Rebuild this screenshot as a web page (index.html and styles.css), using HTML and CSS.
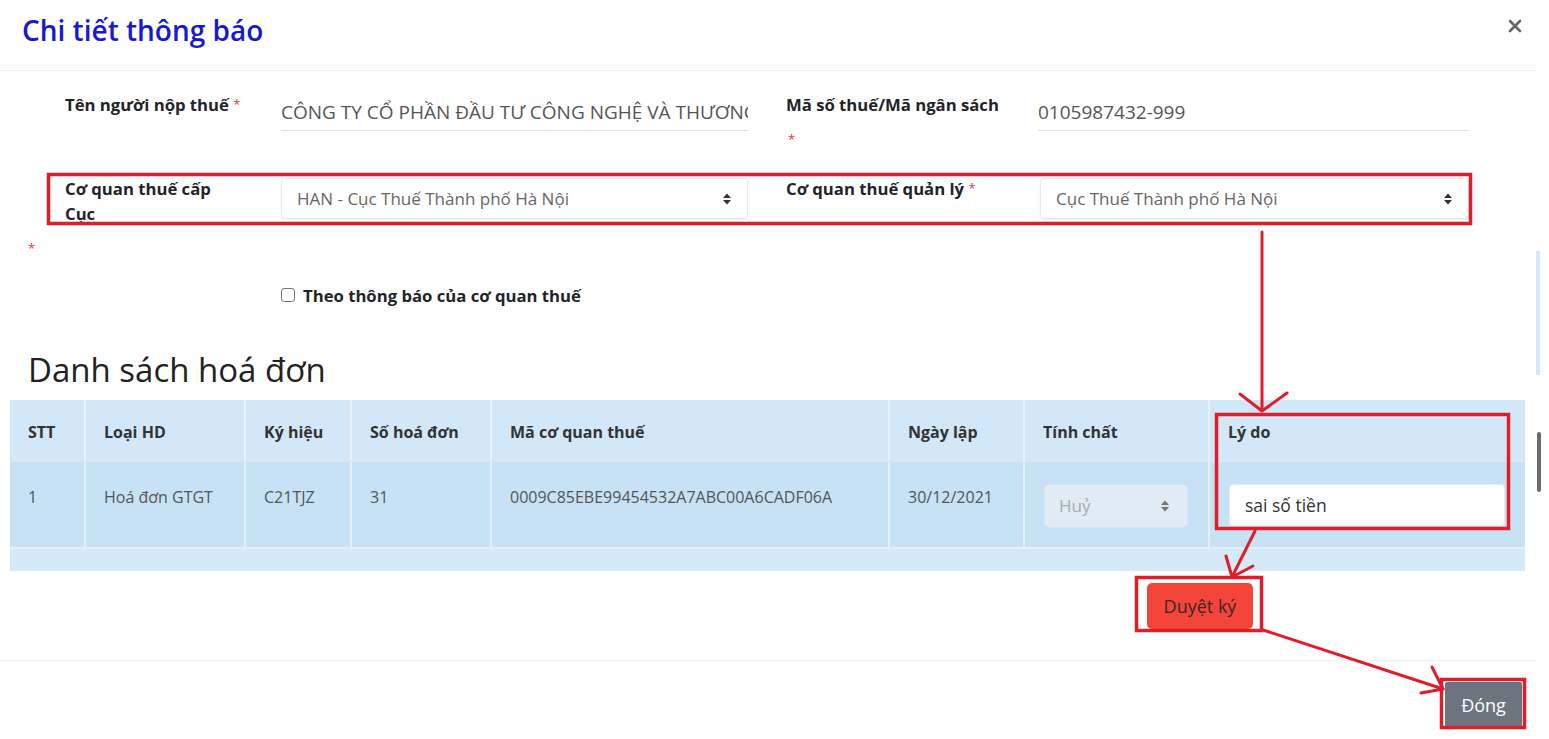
FILE: index.html
```html
<!DOCTYPE html>
<html lang="vi">
<head>
<meta charset="utf-8">
<title>Chi tiết thông báo</title>
<link rel="stylesheet" href="styles.css">
</head>
<body>
<div class="page">
  <div class="modal">
    <header class="modal-header">
      <h1 class="modal-title">Chi tiết thông báo</h1>
      <svg class="close" viewBox="0 0 14 14" width="14" height="14"><path d="M2 2 L12 12 M12 2 L2 12" stroke="#666" stroke-width="2.6" stroke-linecap="round"/></svg>
    </header>

    <main class="modal-body">
      <div class="form-row row-1">
        <label class="lbl lbl-left">Tên người nộp thuế <span class="req">*</span></label>
        <div class="field field-left"><div class="line-input">CÔNG TY CỔ PHẦN ĐẦU TƯ CÔNG NGHỆ VÀ THƯƠNG MẠI</div></div>
        <label class="lbl lbl-right">Mã số thuế/Mã ngân sách<span class="req req-block">*</span></label>
        <div class="field field-right"><div class="line-input">0105987432-999</div></div>
      </div>

      <div class="form-row row-2">
        <label class="lbl lbl-left"><span class="lbl-wrap">Cơ quan thuế cấp Cục</span></label>
        <div class="field field-left">
          <div class="select"><span>HAN - Cục Thuế Thành phố Hà Nội</span><svg class="caret" viewBox="0 0 8 12" width="8" height="12"><path d="M0 5 L4 0.5 L8 5 Z M0 7 L4 11.5 L8 7 Z" fill="#333"/></svg></div>
        </div>
        <label class="lbl lbl-right">Cơ quan thuế quản lý <span class="req">*</span></label>
        <div class="field field-right">
          <div class="select select-right"><span>Cục Thuế Thành phố Hà Nội</span><svg class="caret" viewBox="0 0 8 12" width="8" height="12"><path d="M0 5 L4 0.5 L8 5 Z M0 7 L4 11.5 L8 7 Z" fill="#333"/></svg></div>
        </div>
      </div>

      <div class="orphan-star">*</div>

      <div class="check-row">
        <span class="checkbox"></span>
        <span class="check-label">Theo thông báo của cơ quan thuế</span>
      </div>

      <h2 class="section-title">Danh sách hoá đơn</h2>

      <table class="invoice-table">
        <colgroup>
          <col class="c1"><col class="c2"><col class="c3"><col class="c4"><col class="c5"><col class="c6"><col class="c7"><col class="c8">
        </colgroup>
        <thead>
          <tr>
            <th>STT</th><th>Loại HD</th><th>Ký hiệu</th><th>Số hoá đơn</th><th>Mã cơ quan thuế</th><th>Ngày lập</th><th>Tính chất</th><th>Lý do</th>
          </tr>
        </thead>
        <tbody>
          <tr class="data-row">
            <td>1</td>
            <td>Hoá đơn GTGT</td>
            <td>C21TJZ</td>
            <td>31</td>
            <td>0009C85EBE99454532A7ABC00A6CADF06A</td>
            <td>30/12/2021</td>
            <td class="ctl-cell"><div class="select select-disabled"><span>Huỷ</span><svg class="caret" viewBox="0 0 8 12" width="8" height="12"><path d="M0 5 L4 0.5 L8 5 Z M0 7 L4 11.5 L8 7 Z" fill="#777"/></svg></div></td>
            <td class="ctl-cell"><div class="text-input">sai số tiền</div></td>
          </tr>
          <tr class="blank-row"><td colspan="8"></td></tr>
        </tbody>
      </table>

      <div class="action-row">
        <button class="btn btn-danger">Duyệt ký</button>
      </div>
    </main>

    <footer class="modal-footer">
      <button class="btn btn-secondary">Đóng</button>
    </footer>
  </div>

  <div class="side-strip">
    <div class="track"></div>
    <div class="thumb"></div>
  </div>

  <svg class="annotations" width="1549" height="739" viewBox="0 0 1549 739">
    <g fill="none" stroke="#e11d2a" stroke-width="3.5" stroke-linejoin="miter">
      <rect x="48.5" y="174.5" width="1422" height="49"/>
      <rect x="1216.5" y="414.5" width="292" height="114"/>
      <rect x="1136.5" y="577.5" width="125" height="53"/>
      <rect x="1441.5" y="679.5" width="83" height="48"/>
    </g>
    <g fill="none" stroke="#e11d2a" stroke-width="3" stroke-linecap="round" stroke-linejoin="round">
      <path d="M1262 232 L1262 410"/>
      <path d="M1240 394 L1262 411 L1287 393"/>
      <path d="M1255 531 L1232 577"/>
      <path d="M1226 556 L1232 577 L1253 566"/>
      <path d="M1263 630 L1443 689"/>
      <path d="M1432 667 L1443 689 L1421 693"/>
    </g>
  </svg>
</div>
</body>
</html>
```

FILE: styles.css
```css
* { box-sizing: border-box; }

html, body {
  margin: 0;
  padding: 0;
}

body {
  font-family: "Open Sans", "Noto Sans", sans-serif;
  color: #212529;
  background: #ffffff;
  width: 1549px;
  height: 739px;
  overflow: hidden;
}

.page {
  position: relative;
  display: flex;
  width: 1549px;
  height: 739px;
}

.modal {
  width: 1535px;
  display: flex;
  flex-direction: column;
}

/* Header */
.modal-header {
  height: 71px;
  border-bottom: 1px solid #eceeef;
  display: flex;
  justify-content: space-between;
  align-items: flex-start;
  padding: 12px 13px 0 22px;
}

.modal-title {
  margin: 0;
  font-size: 28px;
  font-weight: 600;
  line-height: 36px;
  color: #1717d6;
}

.close {
  display: block;
  margin-top: 7px;
}

/* Body */
.modal-body {
  height: 589px;
  padding: 21px 10px 0 10px;
}

.form-row {
  display: flex;
  align-items: flex-start;
  padding-left: 55px;
}

.row-1 { height: 84px; }

.lbl {
  font-size: 16.7px;
  font-weight: 700;
  line-height: 25px;
  color: #212529;
}

.lbl-left { width: 216px; }
.lbl-right { width: 252px; margin-left: 38px; }

.lbl-wrap {
  display: block;
  max-width: 160px;
}

.field-left { width: 467px; }
.field-right { width: 431px; }

.req {
  color: #e4393c;
  font-size: 13px;
  font-weight: 400;
  vertical-align: top;
}

.req-block {
  display: block;
  line-height: 20px;
  margin-top: 12px;
  padding-left: 2px;
}

.line-input {
  height: 38px;
  margin-top: 1px;
  border-bottom: 1px solid #dedfe0;
  display: flex;
  align-items: center;
  font-size: 19px;
  color: #555;
  white-space: nowrap;
  overflow: hidden;
}

.select {
  height: 41px;
  margin-top: 2px;
  border: 1px solid #e7e8ea;
  border-radius: 4px;
  background: #fff;
  box-shadow: 0 1px 2px rgba(0, 0, 0, 0.06);
  display: flex;
  align-items: center;
  justify-content: space-between;
  padding: 0 16px 0 15px;
  font-size: 17px;
  color: #666;
  white-space: nowrap;
}

.select-right { margin-left: 2px; }

.caret { display: block; flex: none; }

.orphan-star {
  margin: 10px 0 0 18px;
  height: 24px;
  line-height: 24px;
  font-size: 13px;
  color: #e4393c;
}

.check-row {
  display: flex;
  align-items: center;
  margin-top: 24px;
  padding-left: 271px;
  height: 24px;
}

.checkbox {
  width: 14px;
  height: 14px;
  border: 1px solid #767676;
  border-radius: 3px;
  margin-right: 8px;
  margin-top: -2px;
}

.check-label {
  font-size: 16.7px;
  font-weight: 700;
  line-height: 24px;
}

.section-title {
  margin: 42px 0 0 18px;
  font-size: 33px;
  font-weight: 400;
  line-height: 40px;
  color: #222;
}

/* Table */
.invoice-table {
  margin-top: 10px;
  width: 1515px;
  table-layout: fixed;
  border-collapse: separate;
  border-spacing: 0;
  font-size: 16px;
}

.c1 { width: 74px; }
.c2 { width: 160px; }
.c3 { width: 106px; }
.c4 { width: 140px; }
.c5 { width: 398px; }
.c6 { width: 135px; }
.c7 { width: 185px; }
.c8 { width: 317px; }

.invoice-table th {
  height: 62px;
  background: #d2e7f7;
  text-align: left;
  font-weight: 700;
  color: #333;
  padding: 4px 18px 0 18px;
  vertical-align: middle;
  border-left: 2px solid #e6f1fa;
  border-bottom: 2px solid #dfe7ec;
  white-space: nowrap;
}

.invoice-table td {
  background: #c7e2f5;
  color: #555;
  padding: 23px 18px 0 18px;
  vertical-align: top;
  line-height: 24px;
  border-left: 2px solid #e6f1fa;
  white-space: nowrap;
}

.invoice-table th:first-child,
.invoice-table td:first-child { border-left: none; }

.data-row td {
  height: 87px;
  border-bottom: 2px solid #e4f0f9;
}

.invoice-table td.ctl-cell { padding: 22px 20px 0 19px; }

.select-disabled {
  height: 44px;
  margin-top: 0;
  background: #e0ebf3;
  border: 1px solid #d8e4ed;
  box-shadow: none;
  color: #a3abb2;
  padding: 0 18px 0 14px;
}

.text-input {
  height: 42px;
  background: #fff;
  border-radius: 4px;
  border: 1px solid #e3ecf2;
  display: flex;
  align-items: center;
  padding: 0 15px;
  font-size: 17.5px;
  color: #333;
}

.blank-row td {
  height: 22px;
  padding: 0;
  background: #d5eaf8;
}

.action-row {
  display: flex;
  justify-content: flex-end;
  margin-top: 12px;
  padding-right: 272px;
}

.btn {
  font-family: "Open Sans", "Noto Sans", sans-serif;
  border: none;
  cursor: pointer;
}

.btn-danger {
  width: 106px;
  height: 46px;
  border-radius: 5px;
  background: #f4453a;
  color: #3a2525;
  font-size: 18px;
}

/* Footer */
.modal-footer {
  height: 79px;
  border-top: 1px solid #eceeef;
  display: flex;
  justify-content: flex-end;
  padding: 21px 13px 0 0;
}

.btn-secondary {
  width: 77px;
  height: 45px;
  border-radius: 2px;
  background: #6c757d;
  color: #fff;
  font-size: 18px;
}

/* Page scrollbar strip */
.side-strip {
  width: 14px;
  display: flex;
  flex-direction: column;
  padding-left: 1px;
}

.track {
  margin-top: 251px;
  width: 4px;
  height: 124px;
  background: #d7e8f6;
}

.thumb {
  margin-top: 57px;
  margin-left: 1px;
  width: 4px;
  height: 60px;
  background: #6b6b6b;
  border-radius: 2px;
}

/* Annotation overlay */
.annotations {
  position: absolute;
  left: 0;
  top: 0;
  pointer-events: none;
}
```
